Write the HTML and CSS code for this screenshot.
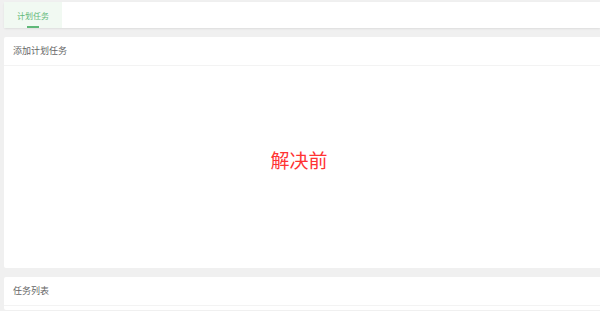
FILE: index.html
```html
<!DOCTYPE html>
<html lang="zh-CN">
<head>
    <meta charset="UTF-8">
    <meta name="viewport" content="width=device-width, initial-scale=1.0">
    <link rel="stylesheet" href="styles.css">
    <title>计划任务</title>
</head>
<body>
    <div class="tabs">
        <div class="tab active">计划任务</div>
    </div>

    <div class="card">
        <div class="card-title">添加计划任务</div>
        <div class="card-body add-body">
            <span class="before">解决前</span>
        </div>
    </div>

    <div class="card">
        <div class="card-title">任务列表</div>
        <div class="card-body list-body"></div>
    </div>
</body>
</html>
```

FILE: styles.css
```css
body {
    margin: 0;
    padding: 2px 0 0 4px;
    background-color: #f0f0f0;
    font-family: "Noto Sans CJK SC", "Noto Sans", sans-serif;
    overflow: hidden;
}

.tabs {
    display: flex;
    height: 26px;
    background-color: #fff;
    border-radius: 2px 0 0 2px;
    box-shadow: 0 1px 2px rgba(0, 0, 0, 0.08);
}

.tab {
    position: relative;
    width: 58px;
    display: flex;
    justify-content: center;
    align-items: center;
    font-size: 8px;
    color: #5fb878;
    cursor: pointer;
}

.tab.active {
    background-color: #f1f9f2;
}

.tab.active::after {
    content: "";
    position: absolute;
    left: 23px;
    bottom: 0;
    width: 12px;
    height: 2px;
    background-color: #5fb878;
}

.card {
    margin-top: 9px;
    background-color: #fff;
    border-radius: 2px 0 0 2px;
}

.card-title {
    height: 28px;
    line-height: 28px;
    padding-left: 9px;
    font-size: 9px;
    color: #666;
    border-bottom: 1px solid #f3f3f3;
}

.add-body {
    height: 202px;
    padding-right: 6px;
    display: flex;
    justify-content: center;
    align-items: flex-start;
}

.before {
    margin-top: 82px;
    font-size: 19px;
    line-height: 24px;
    color: #f33;
}

.list-body {
    height: 4px;
}
```
